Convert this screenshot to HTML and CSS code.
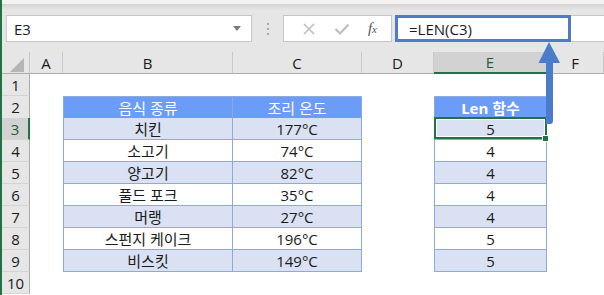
FILE: index.html
```html
<!DOCTYPE html>
<html lang="ko">
<head>
  <meta charset="UTF-8" />
  <title>LEN 함수 – Excel</title>
  <link rel="stylesheet" href="styles.css" />
</head>
<body>
  <div class="window">
    <div class="title-edge"></div>

    <!-- Formula bar -->
    <div class="formula-bar">
      <div class="name-box">
        <span>E3</span>
        <span class="dropdown"></span>
      </div>
      <div class="grip"><i></i><i></i><i></i></div>
      <div class="fx-buttons">
        <svg class="btn-icon" width="14" height="14" viewBox="0 0 14 14">
          <path d="M2 2 L12 12 M12 2 L2 12" stroke="#bdbdbd" stroke-width="1.6" fill="none" />
        </svg>
        <svg class="btn-icon" width="16" height="14" viewBox="0 0 16 14">
          <path d="M1.5 7 L6 11.5 L14.5 2.5" stroke="#bdbdbd" stroke-width="2.2" fill="none" />
        </svg>
        <span class="fx">f<small>x</small></span>
      </div>
      <div class="formula-input">
        <div class="formula-highlight">=LEN(C3)</div>
      </div>
    </div>

    <!-- Sheet grid -->
    <div class="sheet">
      <div class="row">
        <div class="corner"><span class="corner-tri"></span></div>
        <div class="col-head">A</div>
        <div class="col-head">B</div>
        <div class="col-head">C</div>
        <div class="col-head">D</div>
        <div class="col-head active">E</div>
        <div class="col-head">F</div>
      </div>
      <div class="row">
        <div class="row-head">1</div>
        <div></div><div></div><div></div><div></div><div></div><div></div>
      </div>
      <div class="row">
        <div class="row-head">2</div>
        <div></div>
        <div class="t th first">음식 종류</div>
        <div class="t th">조리 온도</div>
        <div></div>
        <div class="t th first bold">Len 함수</div>
        <div></div>
      </div>
      <div class="row">
        <div class="row-head active">3</div>
        <div></div>
        <div class="t band first">치킨</div>
        <div class="t band">177°C</div>
        <div></div>
        <div class="t band first sel">5</div>
        <div></div>
      </div>
      <div class="row">
        <div class="row-head">4</div>
        <div></div>
        <div class="t first">소고기</div>
        <div class="t">74°C</div>
        <div></div>
        <div class="t first">4</div>
        <div></div>
      </div>
      <div class="row">
        <div class="row-head">5</div>
        <div></div>
        <div class="t band first">양고기</div>
        <div class="t band">82°C</div>
        <div></div>
        <div class="t band first">4</div>
        <div></div>
      </div>
      <div class="row">
        <div class="row-head">6</div>
        <div></div>
        <div class="t first">풀드 포크</div>
        <div class="t">35°C</div>
        <div></div>
        <div class="t first">4</div>
        <div></div>
      </div>
      <div class="row">
        <div class="row-head">7</div>
        <div></div>
        <div class="t band first">머랭</div>
        <div class="t band">27°C</div>
        <div></div>
        <div class="t band first">4</div>
        <div></div>
      </div>
      <div class="row">
        <div class="row-head">8</div>
        <div></div>
        <div class="t first">스펀지 케이크</div>
        <div class="t">196°C</div>
        <div></div>
        <div class="t first">5</div>
        <div></div>
      </div>
      <div class="row">
        <div class="row-head">9</div>
        <div></div>
        <div class="t band first">비스킷</div>
        <div class="t band">149°C</div>
        <div></div>
        <div class="t band first">5</div>
        <div></div>
      </div>
      <div class="row">
        <div class="row-head">10</div>
        <div></div><div></div><div></div><div></div><div></div><div></div>
      </div>
    </div>
  </div>

  <!-- Annotation arrow from formula box down to E3 -->
  <svg class="arrow" width="28" height="88" viewBox="0 0 28 88">
    <path d="M13 2 L24 23 L17 23 L17 81 Q17 84 14 84 L10 84 L10 23 L2.5 23 Z" fill="#4b7bcb" />
  </svg>
</body>
</html>
```

FILE: styles.css
```css
/* Global */
body {
  margin: 0;
  width: 604px;
  height: 295px;
  overflow: hidden;
  position: relative;
  background: #FFF;
  font-family: "Open Sans", "Noto Sans CJK KR", sans-serif;
  color: #1A1A1A;
}

.window {
  height: 295px;
  border-left: 2px solid #217346;
}

.title-edge {
  height: 4px;
  background: #F3F2F1;
}

/* Formula bar */
.formula-bar {
  display: flex;
  height: 48px;
  box-sizing: border-box;
  padding: 11px 0 10px 4px;
  background: linear-gradient(#D2D2D2, #E6E6E6 6px);
}
.name-box {
  width: 246px;
  box-sizing: border-box;
  display: flex;
  align-items: center;
  justify-content: space-between;
  padding: 0 8px 0 7px;
  background: #FFF;
  border: 1px solid #C6C6C6;
  font-size: 15px;
}
.dropdown {
  width: 0;
  height: 0;
  border-left: 4px solid transparent;
  border-right: 4px solid transparent;
  border-top: 5px solid #7A7A7A;
  margin-right: 2px;
}
.grip {
  width: 31px;
  display: flex;
  flex-direction: column;
  align-items: center;
  justify-content: center;
  gap: 3px;
}
.grip i {
  width: 2px;
  height: 2px;
  background: #A8A8A8;
}
.fx-buttons {
  width: 109px;
  box-sizing: border-box;
  display: flex;
  align-items: center;
  justify-content: space-between;
  padding: 0 14px 0 18px;
  background: #FFF;
  border: 1px solid #C6C6C6;
}
.fx {
  font-family: "Liberation Serif", serif;
  font-style: italic;
  font-size: 15px;
  color: #555;
}
.fx small {
  font-size: 11px;
}
.formula-input {
  flex: 1;
  display: flex;
  margin-left: 3px;
  background: #FFF;
  border: 1px solid #C6C6C6;
  border-right: none;
}
.formula-highlight {
  width: 176px;
  box-sizing: border-box;
  margin: -1px 0 -1px -1px;
  padding-left: 11px;
  display: flex;
  align-items: center;
  border: 3px solid #4E7AC7;
  font-size: 15px;
}

/* Sheet grid */
.row {
  display: grid;
  grid-template-columns: 28px 33px 170px 129px 72px 113px 1fr;
  height: 22px;
}
.row > div {
  box-sizing: border-box;
  display: flex;
  align-items: center;
  justify-content: center;
  font-size: 15px;
}
.corner {
  background: #E6E6E6;
  border-right: 1px solid #C8C8C8;
  border-bottom: 1px solid #ABABAB;
}
.corner-tri {
  width: 0;
  height: 0;
  margin: 4px 0 0 3px;
  border-left: 14px solid transparent;
  border-bottom: 14px solid #B5B5B5;
}
.col-head {
  background: #E6E6E6;
  border-right: 1px solid #C8C8C8;
  border-bottom: 1px solid #ABABAB;
}
.col-head.active {
  background: #D2D2D2;
  border-bottom: 2px solid #217346;
  color: #1B5E37;
}
.row-head {
  background: #E6E6E6;
  border-right: 1px solid #ABABAB;
  border-bottom: 1px solid #D4D4D4;
}
.row-head.active {
  background: #D2D2D2;
  border-right: 2px solid #217346;
  color: #1B5E37;
}

/* Formatted tables */
.t {
  border-right: 1px solid #8EA9DB;
  border-bottom: 1px solid #8EA9DB;
  font-family: "Open Sans", "Noto Sans CJK KR", sans-serif;
}
.t.first {
  border-left: 1px solid #8EA9DB;
}
.th {
  border-top: 1px solid #8EA9DB;
  background: #6B9CF8;
  color: #FFF;
}
.th.bold {
  font-weight: 700;
}
.band {
  background: #D9E1F2;
}

/* Active cell E3 */
.sel {
  position: relative;
}
.sel::after {
  content: "";
  position: absolute;
  inset: -1px -1px 0 -1px;
  border: 2px solid #217346;
  box-shadow: inset 0 0 0 1px #FFF;
}
.sel::before {
  content: "";
  position: absolute;
  right: -3px;
  bottom: -3px;
  width: 5px;
  height: 5px;
  background: #217346;
  border: 1px solid #FFF;
  z-index: 2;
}

/* Annotation */
.arrow {
  position: absolute;
  left: 536px;
  top: 40px;
  z-index: 5;
}
```
